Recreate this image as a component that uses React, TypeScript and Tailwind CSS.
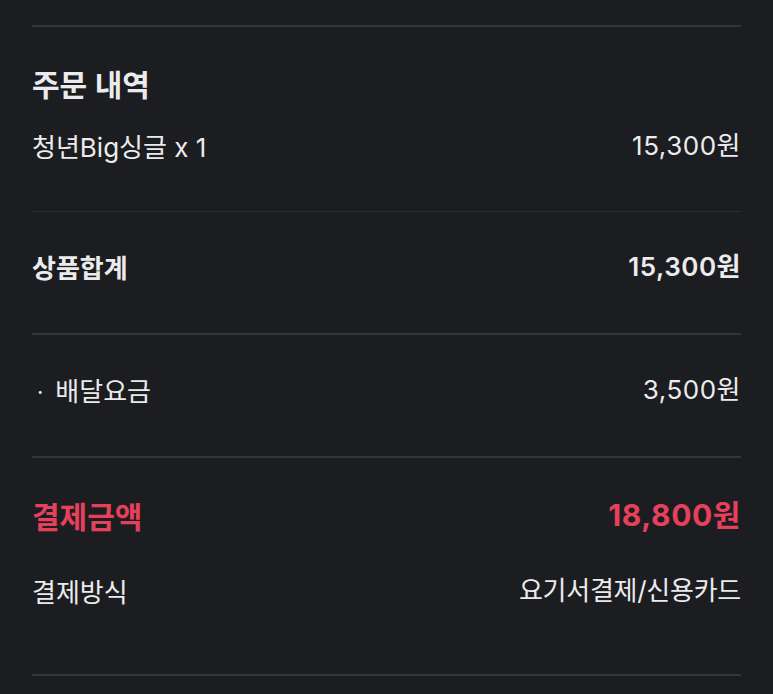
const font = { fontFamily: 'Inter, "Noto Sans CJK KR", sans-serif' };

function Row({
  label,
  value,
  className = "",
  labelClass = "",
  valueClass = "tracking-[0.02em]",
}: {
  label: React.ReactNode;
  value: string;
  className?: string;
  labelClass?: string;
  valueClass?: string;
}) {
  return (
    <div className={`flex items-center justify-between leading-[32px] ${className}`}>
      <span className={labelClass}>{label}</span>
      <span className={`-translate-y-[2px] ${valueClass}`}>{value}</span>
    </div>
  );
}

export default function App() {
  return (
    <div className="min-h-[694px] w-full bg-[#1c1d21] px-8 text-[#ebebed]" style={font}>
      <div className="flex flex-col pt-[25px] pb-[18px]">
        <div className="h-[2px] bg-[#343539]" />

        <h2 className="mt-[42px] text-[30px] leading-[32px] font-semibold">주문 내역</h2>
        <Row className="mt-[31px] text-[26px]" label="청년Big싱글 x 1" value="15,300원" />

        <div className="mt-[47px] border-t border-dotted border-[#3a3b40]" />

        <Row className="mt-[41px] text-[26px] font-semibold" label="상품합계" value="15,300원" />

        <div className="mt-[48px] h-[2px] bg-[#343539]" />

        <Row
          className="mt-[41px] text-[26px]"
          label={
            <span className="flex items-center">
              <span className="ml-[5px] mr-[12px] text-[22px]">·</span>
              배달요금
            </span>
          }
          value="3,500원"
        />

        <div className="mt-[48px] h-[2px] bg-[#343539]" />

        <Row
          className="mt-[43px] text-[30px] font-bold text-[#e5405c]"
          label="결제금액"
          value="18,800원"
        />
        <Row
          className="mt-[44px] text-[26px]"
          label="결제방식"
          value="요기서결제/신용카드"
          valueClass="tracking-[-0.01em]"
        />

        <div className="mt-[65px] h-[2px] bg-[#343539]" />
      </div>
    </div>
  );
}
